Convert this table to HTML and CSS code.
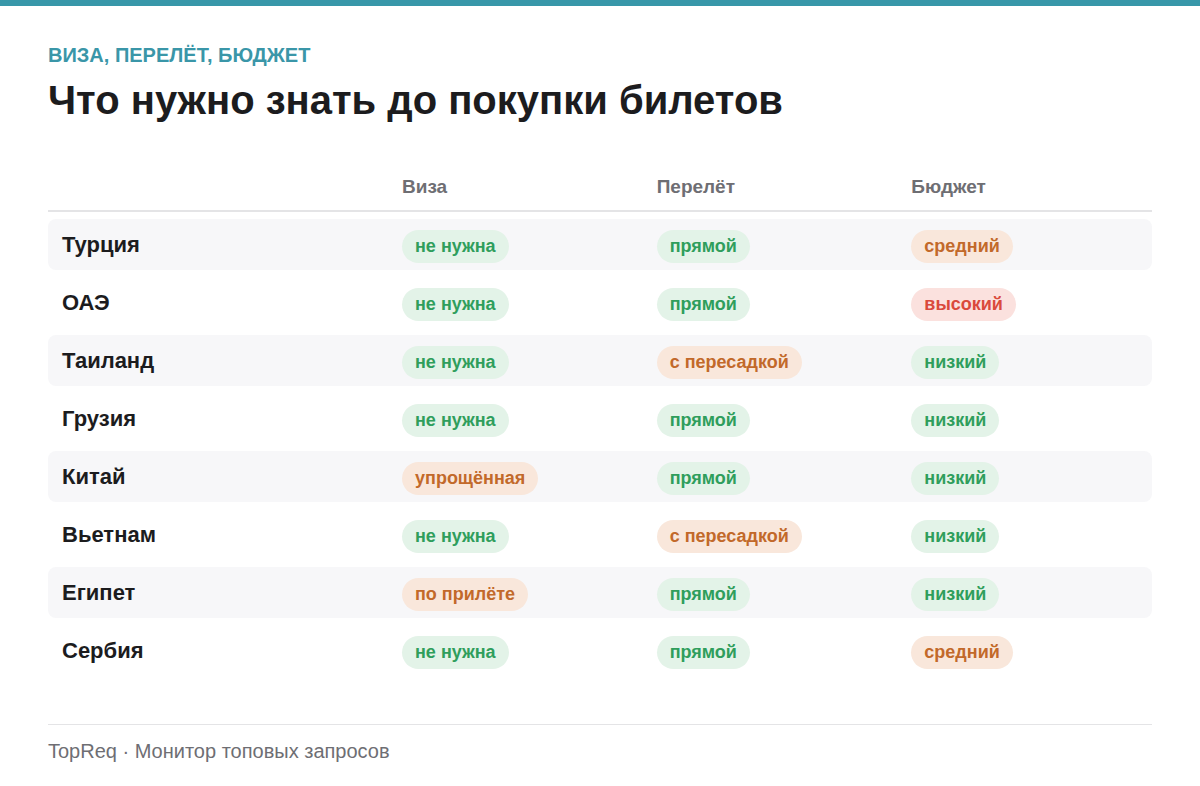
FILE: index.html
```html
<!DOCTYPE html>
<html lang="ru">
<head>
<meta charset="utf-8">
<link rel="stylesheet" href="styles.css">
</head>
<body>
<div class="topbar"></div>
<main class="page">
  <div class="eyebrow">ВИЗА, ПЕРЕЛЁТ, БЮДЖЕТ</div>
  <h1 class="title">Что нужно знать до покупки билетов</h1>
  <div class="table">
    <div class="head">
      <div></div><div>Виза</div><div>Перелёт</div><div>Бюджет</div>
    </div>
    <div class="row alt"><div class="name">Турция</div><div class="cell"><span class="pill green">не нужна</span></div><div class="cell"><span class="pill green">прямой</span></div><div class="cell"><span class="pill orange">средний</span></div></div>
    <div class="row"><div class="name">ОАЭ</div><div class="cell"><span class="pill green">не нужна</span></div><div class="cell"><span class="pill green">прямой</span></div><div class="cell"><span class="pill red">высокий</span></div></div>
    <div class="row alt"><div class="name">Таиланд</div><div class="cell"><span class="pill green">не нужна</span></div><div class="cell"><span class="pill orange">с пересадкой</span></div><div class="cell"><span class="pill green">низкий</span></div></div>
    <div class="row"><div class="name">Грузия</div><div class="cell"><span class="pill green">не нужна</span></div><div class="cell"><span class="pill green">прямой</span></div><div class="cell"><span class="pill green">низкий</span></div></div>
    <div class="row alt"><div class="name">Китай</div><div class="cell"><span class="pill orange">упрощённая</span></div><div class="cell"><span class="pill green">прямой</span></div><div class="cell"><span class="pill green">низкий</span></div></div>
    <div class="row"><div class="name">Вьетнам</div><div class="cell"><span class="pill green">не нужна</span></div><div class="cell"><span class="pill orange">с пересадкой</span></div><div class="cell"><span class="pill green">низкий</span></div></div>
    <div class="row alt"><div class="name">Египет</div><div class="cell"><span class="pill orange">по прилёте</span></div><div class="cell"><span class="pill green">прямой</span></div><div class="cell"><span class="pill green">низкий</span></div></div>
    <div class="row"><div class="name">Сербия</div><div class="cell"><span class="pill green">не нужна</span></div><div class="cell"><span class="pill green">прямой</span></div><div class="cell"><span class="pill orange">средний</span></div></div>
  </div>
  <footer class="footer">TopReq · Монитор топовых запросов</footer>
</main>
</body>
</html>
```
FILE: styles.css
```css
* { box-sizing: border-box; }
html, body { margin: 0; padding: 0; background: #ffffff; }
body { font-family: "Liberation Sans", Arial, sans-serif; color: #1c1c1e; }
.topbar { height: 6px; background: #3897a9; }
.page { padding: 38px 48px 0 48px; }
.eyebrow { font-size: 20px; font-weight: 700; color: #3a96a8; line-height: 22px; }
.title { margin: 10px 0 0 0; font-size: 40px; line-height: 48px; font-weight: 700; color: #1c1c1e; }
.table { margin-top: 39px; }
.head, .row { display: grid; grid-template-columns: 340px 1fr 1fr 1fr; align-items: center; }
.head { height: 49px; border-bottom: 2px solid #e4e4e6; }
.head > div { padding-left: 14px; font-size: 19px; font-weight: 700; color: #6e6e73; }
.row { height: 51px; margin-top: 7px; border-radius: 8px; }
.row > div { padding-left: 14px; }
.row.alt { background: #f7f7f9; }
.name { font-size: 22px; font-weight: 700; color: #1c1c1e; }
.cell { display: flex; align-items: center; }
.pill { display: inline-block; height: 33px; line-height: 33px; padding: 0 13px; border-radius: 17px; font-size: 18px; font-weight: 700; margin-top: 4px; }
.green { background: #e3f3e8; color: #2f9e5c; }
.orange { background: #f9e7db; color: #c2692a; }
.red { background: #fbe1de; color: #da4a3c; }
.footer { margin-top: 48px; border-top: 1px solid #e4e4e6; padding-top: 15px; font-size: 20px; line-height: 23px; color: #6e6e73; }
```
